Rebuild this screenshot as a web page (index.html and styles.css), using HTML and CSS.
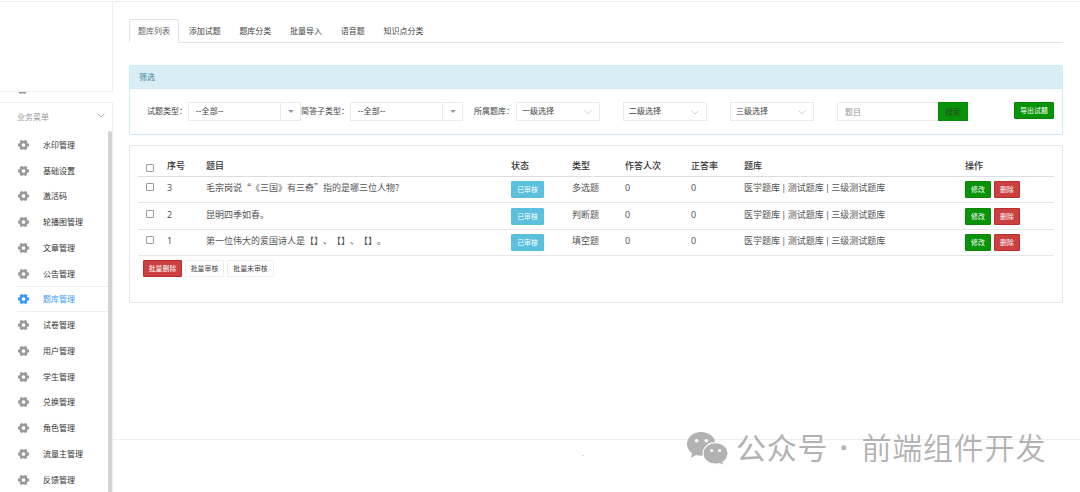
FILE: index.html
```html
<!DOCTYPE html>
<html lang="zh-CN">
<head>
    <meta charset="utf-8">
    <title>题库管理</title>
    <meta name="viewport" content="width=device-width, initial-scale=1">
    <link rel="stylesheet" href="styles.css">
</head>
<body>
    <svg class="symbols">
        <symbol id="gear" viewBox="0 0 12 12">
            <circle cx="6" cy="6" r="3.1" fill="none" stroke="currentColor" stroke-width="2.5"/>
            <path d="M9.600 6h1.900M2.400 6H.5M7.800 9.100l.9 1.500M4.200 2.900l-.9-1.500M4.200 9.100l-.9 1.500M7.800 2.900l.9-1.500" stroke="currentColor" stroke-width="2.900"/>
        </symbol>
        <symbol id="down" viewBox="0 0 8 5">
            <path d="M.5.5L4 4 7.5.5" fill="none" stroke="currentColor" stroke-width=".9"/>
        </symbol>
    </svg>

    <div class="sidebar">
        <div class="logo"></div>
        <div class="clipped"><svg class="gear"><use href="#gear"/></svg></div>
        <div class="menu">
            <div class="menu-title">业务菜单<svg class="arrow"><use href="#down"/></svg></div>
            <ul class="menu-list">
                <li><svg class="gear"><use href="#gear"/></svg>水印管理</li>
                <li><svg class="gear"><use href="#gear"/></svg>基础设置</li>
                <li><svg class="gear"><use href="#gear"/></svg>激活码</li>
                <li><svg class="gear"><use href="#gear"/></svg>轮播图管理</li>
                <li><svg class="gear"><use href="#gear"/></svg>文章管理</li>
                <li><svg class="gear"><use href="#gear"/></svg>公告管理</li>
                <li class="active"><svg class="gear"><use href="#gear"/></svg>题库管理</li>
                <li><svg class="gear"><use href="#gear"/></svg>试卷管理</li>
                <li><svg class="gear"><use href="#gear"/></svg>用户管理</li>
                <li><svg class="gear"><use href="#gear"/></svg>学生管理</li>
                <li><svg class="gear"><use href="#gear"/></svg>兑换管理</li>
                <li><svg class="gear"><use href="#gear"/></svg>角色管理</li>
                <li><svg class="gear"><use href="#gear"/></svg>流量主管理</li>
                <li><svg class="gear"><use href="#gear"/></svg>反馈管理</li>
            </ul>
            <div class="scrollbar"></div>
        </div>
    </div>

    <div class="main">
        <div class="content">
            <div class="tabs">
                <a class="tab current">题库列表</a>
                <a class="tab">添加试题</a>
                <a class="tab">题库分类</a>
                <a class="tab">批量导入</a>
                <a class="tab">语音题</a>
                <a class="tab">知识点分类</a>
            </div>

            <div class="filter">
                <div class="filter-title">筛选</div>
                <div class="filter-body">
                    <label class="label-type">试题类型：</label>
                    <div class="combo"><span>--全部--</span><i></i></div>
                    <label class="label-sub">简答子类型：</label>
                    <div class="combo"><span>--全部--</span><i></i></div>
                    <label class="label-bank">所属题库：</label>
                    <div class="select">一级选择<svg class="arrow"><use href="#down"/></svg></div>
                    <div class="select">二级选择<svg class="arrow"><use href="#down"/></svg></div>
                    <div class="select">三级选择<svg class="arrow"><use href="#down"/></svg></div>
                    <div class="search"><input type="text" placeholder="题目"><button>搜索</button></div>
                    <button class="btn green export">导出试题</button>
                </div>
            </div>

            <div class="panel">
                <table>
                    <colgroup>
                        <col class="c-check"><col class="c-no"><col class="c-title"><col class="c-status"><col class="c-type"><col class="c-count"><col class="c-rate"><col class="c-bank"><col>
                    </colgroup>
                    <thead>
                        <tr>
                            <th><input type="checkbox"></th>
                            <th>序号</th>
                            <th>题目</th>
                            <th>状态</th>
                            <th>类型</th>
                            <th>作答人次</th>
                            <th>正答率</th>
                            <th>题库</th>
                            <th>操作</th>
                        </tr>
                    </thead>
                    <tbody>
                        <tr>
                            <td><input type="checkbox"></td>
                            <td>3</td>
                            <td class="title">毛宗岗说“《三国》有三奇”指的是哪三位人物?</td>
                            <td><button class="btn blue">已审核</button></td>
                            <td>多选题</td>
                            <td>0</td>
                            <td>0</td>
                            <td class="bank">医学题库 | 测试题库 | 三级测试题库</td>
                            <td><div class="ops"><button class="btn green">修改</button><button class="btn red">删除</button></div></td>
                        </tr>
                        <tr>
                            <td><input type="checkbox"></td>
                            <td>2</td>
                            <td class="title">昆明四季如春。</td>
                            <td><button class="btn blue">已审核</button></td>
                            <td>判断题</td>
                            <td>0</td>
                            <td>0</td>
                            <td class="bank">医学题库 | 测试题库 | 三级测试题库</td>
                            <td><div class="ops"><button class="btn green">修改</button><button class="btn red">删除</button></div></td>
                        </tr>
                        <tr>
                            <td><input type="checkbox"></td>
                            <td>1</td>
                            <td class="title">第一位伟大的爱国诗人是【】、【】、【】。</td>
                            <td><button class="btn blue">已审核</button></td>
                            <td>填空题</td>
                            <td>0</td>
                            <td>0</td>
                            <td class="bank">医学题库 | 测试题库 | 三级测试题库</td>
                            <td><div class="ops"><button class="btn green">修改</button><button class="btn red">删除</button></div></td>
                        </tr>
                    </tbody>
                </table>
                <div class="batch">
                    <button class="btn red">批量删除</button>
                    <button class="btn plain">批量审核</button>
                    <button class="btn plain wide">批量未审核</button>
                </div>
            </div>
        </div>
        <div class="footer">.</div>
    </div>

    <div class="account">
        <svg class="wechat" viewBox="0 0 42 35">
            <path d="M15 1C7 1 1 6.300 1 13c0 4 2 7 5 9.200L5 27l5-3c1.600.5 3.300.7 5 .7 8 0 14.300-5.300 14.300-12S23 1 15 1z" fill="#b2b2b2"/>
            <path d="M29.500 11.700c-7 0-12.500 4.800-12.500 10.800s5.500 10.700 12.500 10.700c1.500 0 2.900-.2 4.200-.6l4.300 2.200-1-3.700c3-2 5-5 5-8.600 0-6-5.500-10.800-12.500-10.800z" fill="#b2b2b2" stroke="#fff" stroke-width="1.200"/>
            <g fill="#fff">
                <circle cx="10.700" cy="9.700" r="1.800"/><circle cx="20.300" cy="9.700" r="1.800"/>
                <circle cx="25.600" cy="19.500" r="1.600"/><circle cx="33.500" cy="19.500" r="1.600"/>
            </g>
        </svg>
        <span class="kind">公众号</span><span class="dot">·</span><span>前端组件开发</span>
    </div>
</body>
</html>
```

FILE: styles.css
```css
* {
    box-sizing: border-box;
}
body {
    margin: 0;
    height: 492px;
    display: flex;
    overflow: hidden;
    position: relative;
    background: #fff;
    color: #444;
    font-family: "Noto Sans", "Noto Sans CJK SC", sans-serif;
    font-size: 8px;
}
button, input {
    font-family: inherit;
    margin: 0;
}
.symbols {
    position: absolute;
    width: 0;
    height: 0;
}

/* sidebar */
.sidebar {
    width: 113px;
    flex: none;
    display: flex;
    flex-direction: column;
}
.logo {
    height: 92px;
    margin-top: 1px;
    border: 1px solid #eee;
    border-left: 0;
}
.clipped {
    height: 10px;
    padding-left: 16px;
    overflow: hidden;
}
.clipped .gear {
    display: block;
    margin-top: -9px;
}
.menu {
    flex: 1;
    position: relative;
    border: 1px solid #eee;
    border-width: 1px 1px 0 0;
}
.menu-title {
    height: 28px;
    padding: 0 7px 0 17px;
    display: flex;
    align-items: center;
    justify-content: space-between;
    color: #999;
}
.arrow {
    width: 8px;
    height: 5px;
    color: #aaa;
}
.menu-title .arrow {
    margin-top: -2px;
}
.menu-list {
    list-style: none;
    margin: 0;
    padding: 1px 0 0 17px;
}
.menu-list li {
    height: 25.75px;
    display: flex;
    align-items: center;
    gap: 13px;
    color: #333;
}
.menu-list .active {
    color: #3a99f5;
    border: 1px solid #eee;
    border-width: 1px 0;
}
.gear {
    width: 13px;
    height: 12px;
    margin-top: 1px;
    color: #999;
}
.active .gear {
    color: #3a99f5;
}
.scrollbar {
    position: absolute;
    top: 28px;
    right: 0;
    bottom: 0;
    width: 4px;
    border-radius: 2px 2px 0 0;
    background: #d3d3d3;
}

/* right side */
.main {
    flex: 1;
    display: flex;
    flex-direction: column;
    margin-top: 1px;
    border-top: 1px solid #eee;
}
.content {
    height: 437px;
    padding: 17px 17px 0 16px;
}
.tabs {
    height: 24px;
    display: flex;
    gap: .7px;
    border-bottom: 1px solid #e4e4e4;
}
.tab {
    height: 24px;
    padding: 0 8px;
    border: 1px solid transparent;
    line-height: 22px;
}
.current {
    border-color: #e4e4e4;
    border-bottom-color: #fff;
    border-radius: 2px 2px 0 0;
    color: #666;
}
.filter {
    margin-top: 22px;
    height: 70px;
    border: 1px solid #cdebf2;
    border-radius: 2px;
}
.filter-title {
    height: 23px;
    padding-left: 9px;
    line-height: 22px;
    background: #d9edf6;
    border-bottom: 1px solid #d0ebf3;
    color: #4583a0;
}
.filter-body {
    display: flex;
    padding: 13px 8px 0 17px;
    line-height: 18px;
}
.label-type {
    width: 41px;
}
.label-sub {
    width: 49px;
    white-space: nowrap;
}
.label-bank {
    width: 53px;
    padding-left: 11px;
    white-space: nowrap;
}
.combo {
    width: 113px;
    height: 19px;
    display: flex;
    justify-content: space-between;
    border: 1px solid #eaeaea;
    line-height: 16px;
}
.combo span {
    padding-left: 7px;
    letter-spacing: .2px;
}
.combo i {
    width: 20px;
    border-left: 1px solid #eaeaea;
    display: flex;
    align-items: center;
    justify-content: center;
}
.combo i::after {
    content: "";
    border: 3px solid transparent;
    border-top-color: #999;
    border-bottom: 0;
}
.select {
    width: 84px;
    height: 19px;
    margin-right: 23px;
    padding: 0 7px 1px 5px;
    display: flex;
    align-items: center;
    justify-content: space-between;
    border: 1px solid #eaeaea;
}
.select .arrow {
    margin-top: 3px;
    color: #ccc;
}
.search {
    display: flex;
    height: 19px;
}
.search input {
    width: 101px;
    padding: 0 7px;
    border: 1px solid #eaeaea;
    border-right: 0;
    font-size: 8px;
}
.search input::placeholder {
    color: #999;
}
.search button {
    width: 30px;
    padding: 0;
    border: 1px solid #0a8a0a;
    background: #099309;
    color: #234d23;
    font-size: 8px;
}
.btn {
    display: block;
    height: 17px;
    padding: 0;
    border: 1px solid;
    border-radius: 1px;
    color: #fff;
    font-size: 6.900px;
    line-height: 15px;
    white-space: nowrap;
}
.green {
    background: #099309;
    border-color: #0a850a;
}
.red {
    background: #cb4040;
    border-color: #b92c2c;
}
.blue {
    width: 33px;
    background: #5bc0de;
    border-color: #5bc0de;
}
.plain {
    background: #fff;
    border-color: #eee;
    color: #444;
}
.export {
    width: 40px;
    margin-left: auto;
}

/* question table */
.panel {
    margin-top: 10px;
    height: 158px;
    padding: 8px 8px 0;
    border: 1px solid #e6e6e6;
    border-radius: 2px;
}
table {
    width: 916px;
    table-layout: fixed;
    border-collapse: collapse;
    font-size: 9px;
}
.c-check { width: 29px; }
.c-no { width: 39px; }
.c-title { width: 305px; }
.c-status { width: 61px; }
.c-type { width: 53px; }
.c-count { width: 66px; }
.c-rate { width: 53px; }
.c-bank { width: 221px; }
th, td {
    padding: 0;
    text-align: left;
    white-space: nowrap;
}
th {
    height: 22px;
    padding-top: 1px;
    border-bottom: 1px solid #ddd;
    color: #333;
    font-weight: 500;
}
td {
    height: 26.670px;
    padding-top: 4.500px;
    border-bottom: 1px solid #e6e6e6;
    line-height: 14px;
    vertical-align: top;
    color: #555;
}
.title {
    font-family: "Noto Sans CJK SC", sans-serif;
    text-spacing-trim: space-all;
}
.bank {
    word-spacing: -1px;
}
th:first-child, td:first-child {
    padding-left: 8px;
}
th:first-child {
    padding-top: 6px;
}
input[type="checkbox"] {
    appearance: none;
    display: block;
    width: 8px;
    height: 8px;
    border: 1px solid #999;
    border-radius: 1px;
}
td input[type="checkbox"] {
    margin-top: 2px;
}
.ops {
    display: flex;
    gap: 3px;
}
.ops .btn {
    width: 26px;
}
.batch {
    display: flex;
    gap: 3px;
    padding: 4px 0 0 5px;
}
.batch .btn {
    width: 39px;
}
.batch .wide {
    width: 47px;
}
.footer {
    flex: 1;
    padding: 7px 0 0 469px;
    border-top: 1px solid #eee;
    color: #aaa;
}

/* account name over the page */
.account {
    position: absolute;
    left: 686px;
    top: 430px;
    display: flex;
    align-items: center;
    height: 36px;
    color: #b2b2b2;
    font-family: "Noto Sans CJK SC", sans-serif;
    font-size: 30px;
    font-weight: 350;
    line-height: 34px;
    letter-spacing: .8px;
    white-space: nowrap;
}
.account span {
    margin-top: -4px;
}
.account .kind {
    font-weight: 400;
}
.wechat {
    width: 42px;
    height: 35px;
    margin-right: 8px;
}
.account .dot {
    width: 33px;
    margin-top: -1px;
    font-family: "Liberation Sans", sans-serif;
    font-weight: 700;
    text-align: center;
}
```
